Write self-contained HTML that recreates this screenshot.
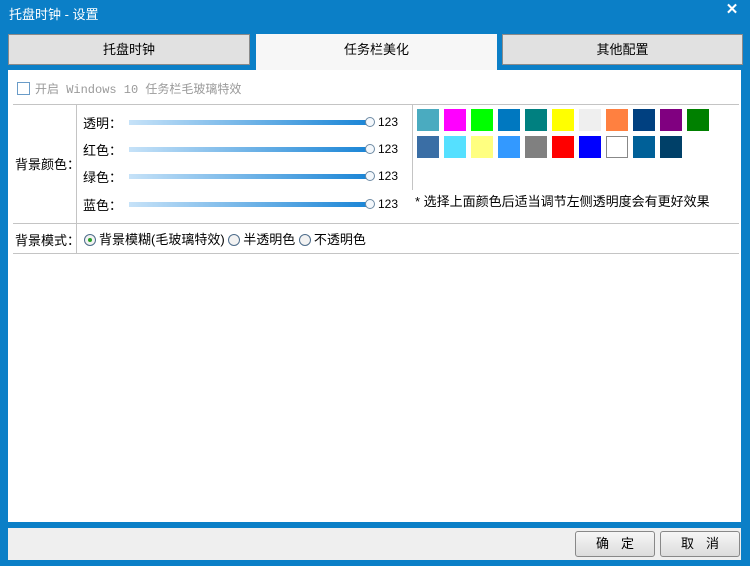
<!DOCTYPE html><html><head><meta charset="utf-8"><style>
*{margin:0;padding:0;box-sizing:border-box}
body{width:750px;height:566px;background:#0b7fc7;position:relative;overflow:hidden;font-family:"Liberation Sans","Noto Sans CJK SC",sans-serif;font-size:12px;color:#000}
.a{position:absolute}
.tab{position:absolute;top:34px;height:31px;background:#e1e1e1;border:1px solid #8a8a8a;text-align:center;line-height:30px;font-size:13px}
.ln{position:absolute;background:#c4c4c4}
.sl{position:absolute;left:129px;width:240px;height:5px;background:linear-gradient(90deg,#c6e2f8,#1a85d6)}
.th{position:absolute;left:365px;width:10px;height:10px;border-radius:50%;background:#f4f8fc;border:1px solid #6d8aa4}
.sw{position:absolute;width:22px;height:22px}
.rd{display:inline-block;width:12px;height:12px;border-radius:50%;border:1px solid #4d6c8a;background:#f2f2f2;vertical-align:-2px;margin-right:3px;position:relative}
.btn{position:absolute;top:531px;width:80px;height:26px;border:1px solid #888;border-radius:3px;background:linear-gradient(#f6f6f6,#dcdcdc);text-align:center;line-height:24px;font-size:13px;letter-spacing:12px;text-indent:12px}
</style></head><body>
<div class="a" style="left:9px;top:4px;color:#fff;font-size:13px">托盘时钟 - 设置</div>
<div class="a" style="left:722px;top:0;width:20px;height:20px;color:#fff;font-size:15px;font-weight:bold;text-align:center;line-height:20px">✕</div>
<div class="tab" style="left:8px;width:242px">托盘时钟</div>
<div class="a" style="left:256px;top:34px;width:241px;height:37px;background:#f7f7f7;text-align:center;line-height:32px;font-size:13px">任务栏美化</div>
<div class="tab" style="left:502px;width:241px">其他配置</div>
<div class="a" style="left:8px;top:70px;width:733px;height:452px;background:#fff"></div>
<div class="a" style="left:17px;top:82px;width:13px;height:13px;border:1px solid #6a9cc8;background:#fff"></div>
<div class="a" style="left:35px;top:80px;color:#9a9a9a;font-family:'Liberation Mono','Noto Sans CJK SC',monospace;font-size:12px">开启 Windows 10 任务栏毛玻璃特效</div>
<div class="ln" style="left:13px;top:104px;width:726px;height:1px"></div>
<div class="ln" style="left:13px;top:223px;width:726px;height:1px"></div>
<div class="ln" style="left:13px;top:253px;width:726px;height:1px"></div>
<div class="ln" style="left:76px;top:104px;width:1px;height:150px"></div>
<div class="ln" style="left:412px;top:104px;width:1px;height:86px"></div>
<div class="a" style="left:15px;top:154px;font-size:13px">背景颜色：</div>
<div class="a" style="left:83px;top:113px;font-size:13px">透明：</div>
<div class="a" style="left:83px;top:140px;font-size:13px">红色：</div>
<div class="a" style="left:83px;top:167px;font-size:13px">绿色：</div>
<div class="a" style="left:83px;top:195px;font-size:13px">蓝色：</div>
<div class="sl" style="top:120px"></div><div class="th" style="top:117px"></div><div class="a" style="left:378px;top:115px">123</div>
<div class="sl" style="top:147px"></div><div class="th" style="top:144px"></div><div class="a" style="left:378px;top:142px">123</div>
<div class="sl" style="top:174px"></div><div class="th" style="top:171px"></div><div class="a" style="left:378px;top:169px">123</div>
<div class="sl" style="top:202px"></div><div class="th" style="top:199px"></div><div class="a" style="left:378px;top:197px">123</div>
<div class="sw" style="left:417px;top:109px;background:#4aabc0"></div>
<div class="sw" style="left:444px;top:109px;background:#ff00ff"></div>
<div class="sw" style="left:471px;top:109px;background:#00ff00"></div>
<div class="sw" style="left:498px;top:109px;background:#0078c0"></div>
<div class="sw" style="left:525px;top:109px;background:#008080"></div>
<div class="sw" style="left:552px;top:109px;background:#ffff00"></div>
<div class="sw" style="left:579px;top:109px;background:#efefef"></div>
<div class="sw" style="left:606px;top:109px;background:#ff8040"></div>
<div class="sw" style="left:633px;top:109px;background:#004080"></div>
<div class="sw" style="left:660px;top:109px;background:#800080"></div>
<div class="sw" style="left:687px;top:109px;background:#008000"></div>
<div class="sw" style="left:417px;top:136px;background:#3a6ea5"></div>
<div class="sw" style="left:444px;top:136px;background:#55e0ff"></div>
<div class="sw" style="left:471px;top:136px;background:#ffff80"></div>
<div class="sw" style="left:498px;top:136px;background:#3399ff"></div>
<div class="sw" style="left:525px;top:136px;background:#808080"></div>
<div class="sw" style="left:552px;top:136px;background:#ff0000"></div>
<div class="sw" style="left:579px;top:136px;background:#0000ff"></div>
<div class="sw" style="left:606px;top:136px;background:#fff;border:1px solid #888"></div>
<div class="sw" style="left:633px;top:136px;background:#006098"></div>
<div class="sw" style="left:660px;top:136px;background:#004068"></div>
<div class="a" style="left:415px;top:191px;font-size:13px">* 选择上面颜色后适当调节左侧透明度会有更好效果</div>
<div class="a" style="left:15px;top:230px;font-size:13px">背景模式：</div>
<div class="a" style="left:84px;top:229px;font-size:13px;white-space:nowrap"><span class="rd"><span class="a" style="left:3px;top:3px;width:4px;height:4px;border-radius:50%;background:#2aa02a"></span></span>背景模糊(毛玻璃特效) <span class="rd"></span>半透明色 <span class="rd"></span>不透明色</div>
<div class="a" style="left:8px;top:528px;width:733px;height:32px;background:#efefef"></div>
<div class="btn" style="left:575px">确定</div>
<div class="btn" style="left:660px">取消</div>
</body></html>
